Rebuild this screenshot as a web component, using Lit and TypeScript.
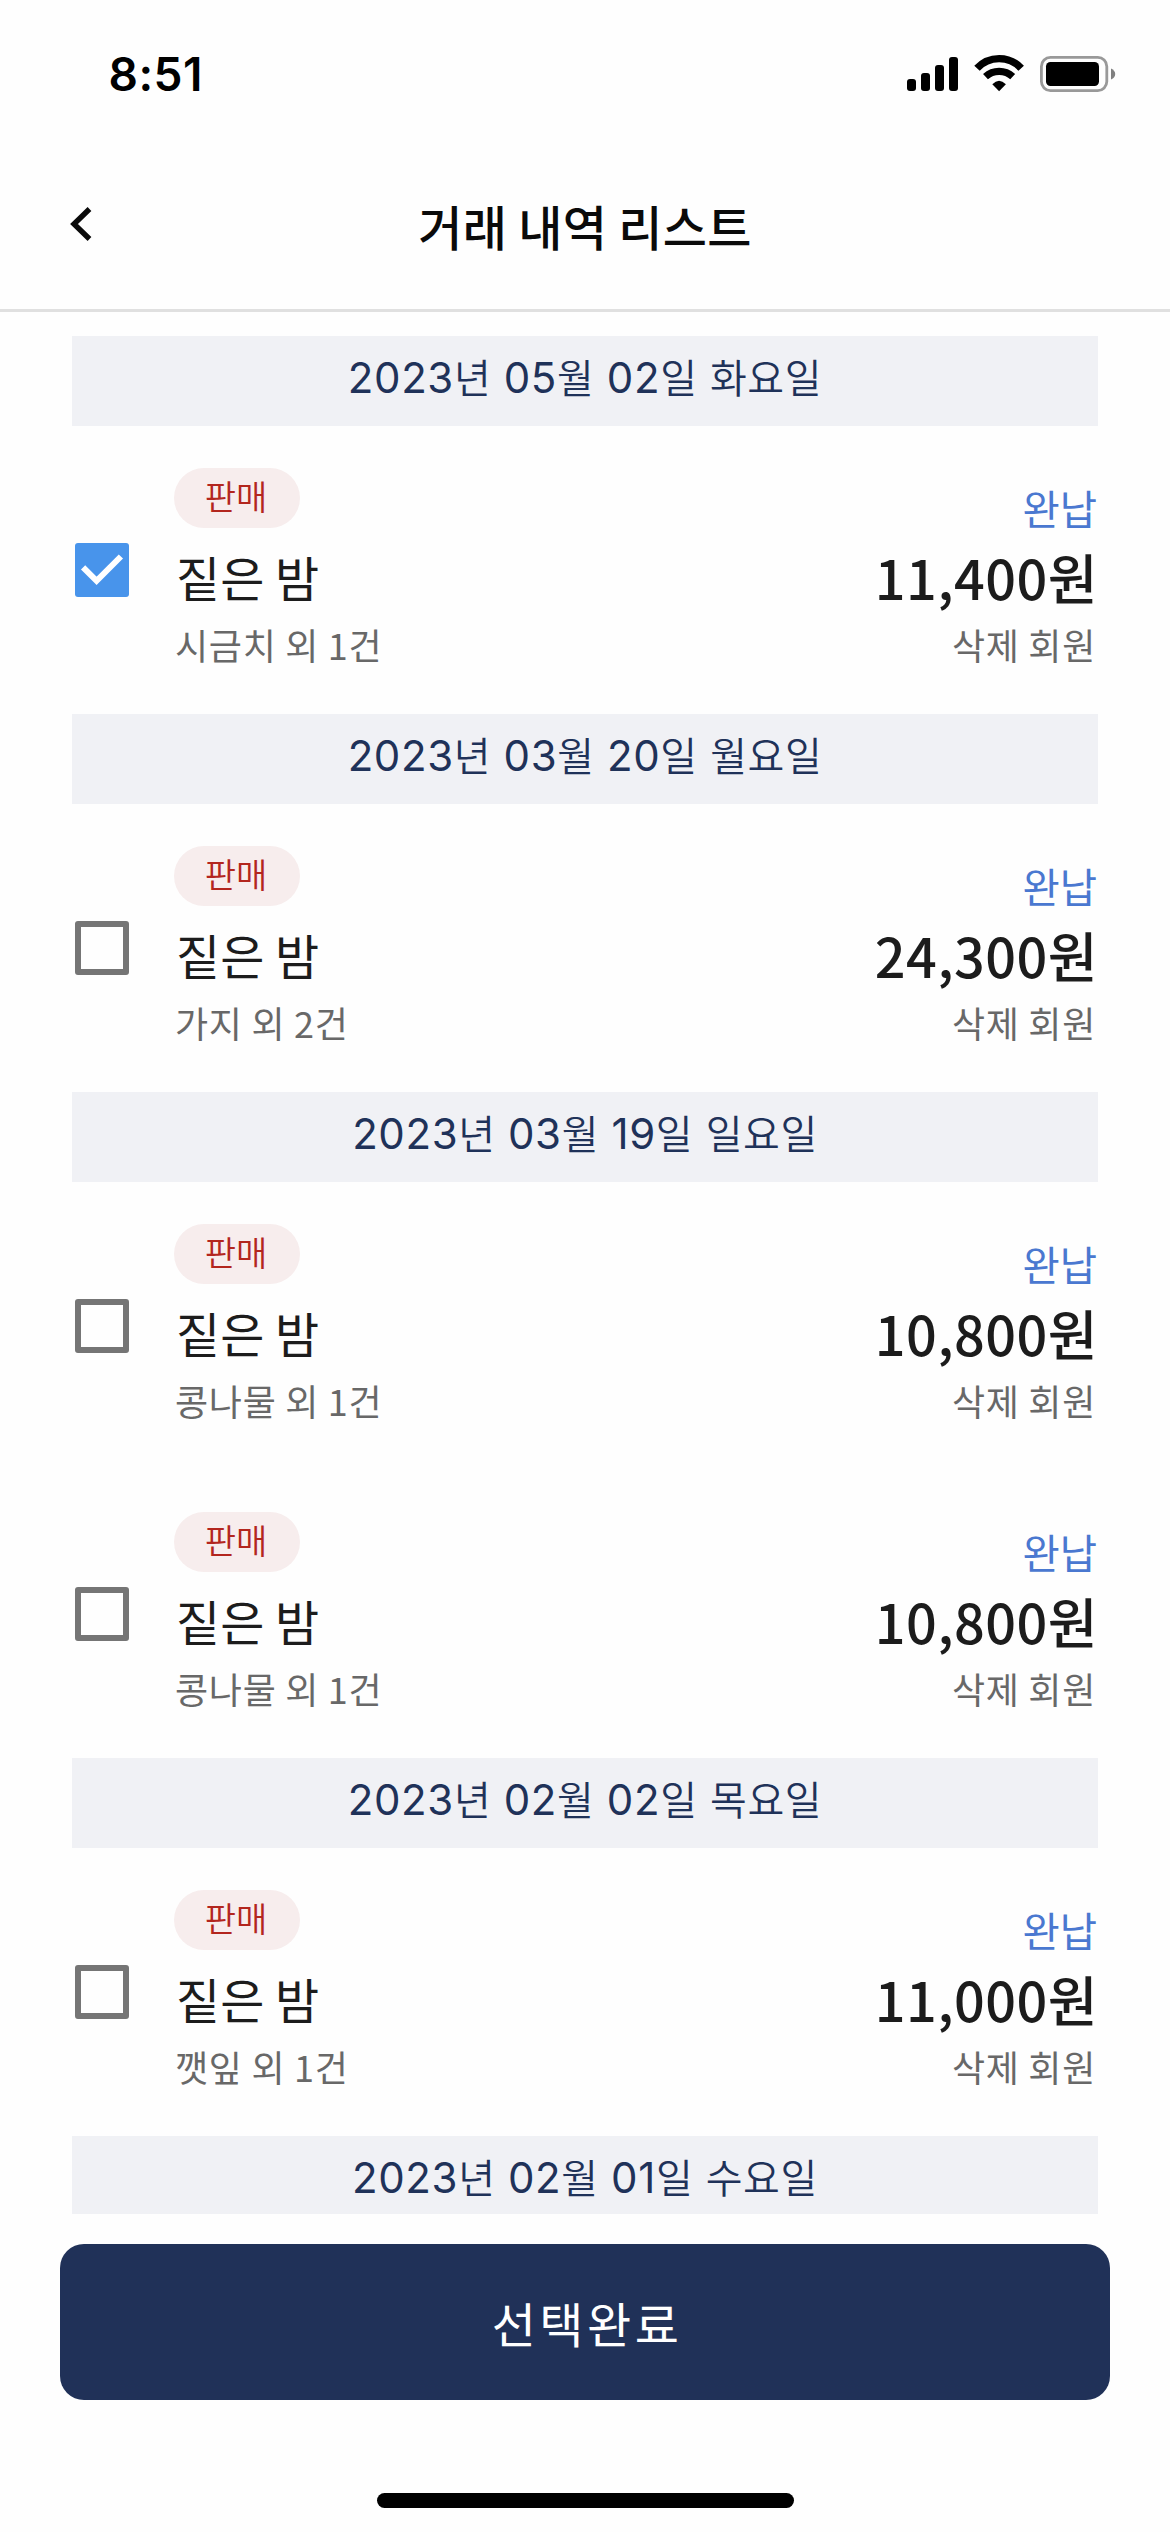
import { LitElement, html, css, svg } from "lit";
import { customElement, property } from "lit/decorators.js";
import { classMap } from "lit/directives/class-map.js";

interface Trade {
  kind: string;
  name: string;
  detail: string;
  status: string;
  amount: string;
  member: string;
  checked: boolean;
}

interface TradeGroup {
  date: string;
  trades: Trade[];
}

const trade = (detail: string, amount: string, checked = false): Trade => ({
  kind: "판매",
  name: "짙은 밤",
  detail,
  status: "완납",
  amount,
  member: "삭제 회원",
  checked,
});

const GROUPS: TradeGroup[] = [
  { date: "2023년 05월 02일 화요일", trades: [trade("시금치 외 1건", "11,400원", true)] },
  { date: "2023년 03월 20일 월요일", trades: [trade("가지 외 2건", "24,300원")] },
  {
    date: "2023년 03월 19일 일요일",
    trades: [trade("콩나물 외 1건", "10,800원"), trade("콩나물 외 1건", "10,800원")],
  },
  { date: "2023년 02월 02일 목요일", trades: [trade("깻잎 외 1건", "11,000원")] },
  { date: "2023년 02월 01일 수요일", trades: [] },
];

@customElement("status-bar")
export class StatusBar extends LitElement {
  static styles = css`
    :host {
      display: flex;
      justify-content: space-between;
      align-items: flex-start;
      height: 141px;
      padding: 46px 54px 0 108.5px;
      box-sizing: border-box;
    }
    .time {
      font: 600 46px/56px Inter, "Liberation Sans", sans-serif;
      letter-spacing: 0.5px;
      color: #000;
    }
    .icons {
      display: flex;
      padding-top: 8px;
    }
  `;

  render() {
    return html`
      <span class="time">8:51</span>
      <svg class="icons" width="210" height="40" viewBox="906 54 210 40">
        <rect x="907" y="79" width="9" height="12" rx="3" />
        <rect x="921" y="73" width="9" height="18" rx="3" />
        <rect x="935" y="65" width="9" height="26" rx="3" />
        <rect x="949" y="57" width="9" height="34" rx="3" />
        ${svg`
          <path d="M977 68.3A30 30 0 0 1 1021.2 68.3" fill="none" stroke="#000" stroke-width="7.4" />
          <path d="M985.5 76.7A20 20 0 0 1 1012.7 76.7" fill="none" stroke="#000" stroke-width="7.2" />
          <path d="M992.3 84.2Q999 77.2 1005.9 84.2L999.1 91.2Z" />
          <rect x="1041.4" y="57.4" width="65.4" height="33.2" rx="9" fill="none" stroke="#999" stroke-width="2.8" />
          <rect x="1046" y="62" width="53" height="24" rx="4.5" />
          <path d="M1111 68.5Q1115.2 70.5 1115.2 74T1111 79.5Z" fill="#808080" />
        `}
      </svg>
    `;
  }
}

@customElement("check-box")
export class CheckBox extends LitElement {
  @property({ type: Boolean }) checked = false;

  static styles = css`
    :host {
      display: block;
      width: 54px;
      height: 54px;
    }
    .box {
      box-sizing: border-box;
      width: 54px;
      height: 54px;
      border: 6px solid #757575;
      border-radius: 3px;
    }
    .box.on {
      border: 0;
      background: #4894eb;
    }
    .mark {
      display: block;
    }
  `;

  render() {
    return html`
      <div class=${classMap({ box: true, on: this.checked })}>
        ${this.checked
          ? html`<svg class="mark" width="54" height="54" viewBox="0 0 54 54">
              <path d="M8.1 24.3L21.6 37.8L45.9 13.5" fill="none" stroke="#fff" stroke-width="6" />
            </svg>`
          : null}
      </div>
    `;
  }
}

@customElement("trade-row")
export class TradeRow extends LitElement {
  @property({ attribute: false }) trade!: Trade;

  static styles = css`
    :host {
      display: flex;
      align-items: flex-start;
      height: 288px;
      box-sizing: border-box;
      padding-left: 3px;
    }
    .check {
      margin-top: 117px;
    }
    .info {
      display: flex;
      flex-direction: column;
      align-items: flex-start;
      margin-left: 45px;
      padding-top: 42px;
      flex: 1;
    }
    .badge {
      box-sizing: border-box;
      width: 126px;
      height: 60px;
      padding-right: 2px;
      border-radius: 30px;
      background: #f7eded;
      color: #b3261e;
      font-size: 34px;
      font-weight: 350;
      line-height: 55px;
      text-align: center;
    }
    .name {
      margin: 12px 0 0 2px;
      font-size: 48px;
      line-height: 72px;
      color: #1c1c1c;
    }
    .sub {
      font-size: 36px;
      line-height: 54px;
      letter-spacing: 0.7px;
      color: #686868;
    }
    .info .sub {
      margin: 5px 0 0 1px;
    }
    .side {
      display: flex;
      flex-direction: column;
      align-items: flex-end;
      padding-top: 52px;
    }
    .status {
      margin-right: 1px;
      font-size: 40.5px;
      line-height: 60px;
      color: #4a78d0;
    }
    .amount {
      font-size: 54px;
      font-weight: 500;
      line-height: 78px;
      letter-spacing: 0.5px;
      color: #1c1c1c;
    }
    .side .sub {
      margin: 1px 2px 0 0;
    }
  `;

  render() {
    const t = this.trade;
    return html`
      <check-box class="check" ?checked=${t.checked}></check-box>
      <div class="info">
        <span class="badge">${t.kind}</span>
        <span class="name">${t.name}</span>
        <span class="sub">${t.detail}</span>
      </div>
      <div class="side">
        <span class="status">${t.status}</span>
        <span class="amount">${t.amount}</span>
        <span class="sub">${t.member}</span>
      </div>
    `;
  }
}

@customElement("app-root")
export class AppRoot extends LitElement {
  static styles = css`
    :host {
      display: flex;
      flex-direction: column;
      width: 1170px;
      height: 2532px;
      overflow: hidden;
      background: #fefefe;
      font-family: "Noto Sans CJK KR", "Noto Sans", sans-serif;
    }
    .bar {
      display: grid;
      grid-template-columns: 92px 1fr 92px;
      align-items: center;
      height: 168px;
      border-bottom: 3px solid #e0e0e0;
    }
    .back {
      justify-self: end;
      margin-bottom: 2px;
    }
    .title {
      margin: 0;
      text-align: center;
      font-size: 48px;
      font-weight: 500;
      line-height: 72px;
      letter-spacing: 0.3px;
      color: #0a0a0a;
    }
    .list {
      height: 1878px;
      margin: 24px 72px 0;
      overflow: hidden;
    }
    .date {
      height: 90px;
      background: #f0f1f5;
      color: #1f3259;
      text-align: center;
      font-family: Inter, "Noto Sans CJK KR", sans-serif;
      font-size: 42px;
      font-weight: 400;
      line-height: 83px;
      letter-spacing: 0.6px;
    }
    .hangul {
      font-size: 40px;
      font-weight: 350;
      line-height: 1;
    }
    .done {
      display: block;
      flex: none;
      height: 156px;
      margin: 30px 60px 0;
      padding: 0 0 0 4px;
      border: 0;
      border-radius: 24px;
      background: #203158;
      color: #fff;
      font: 400 48px/156px "Noto Sans CJK KR", sans-serif;
      letter-spacing: 3.5px;
    }
    .home {
      flex: none;
      align-self: center;
      width: 417px;
      height: 15px;
      margin-top: 93px;
      border-radius: 8px;
      background: #000;
    }
  `;

  /** Sets the Hangul runs of a date slightly smaller than its digits. */
  private dateText(date: string) {
    const runs = date.match(/[가-힣]+|[^가-힣]+/g) ?? [];
    return runs.map((run) => (/[가-힣]/.test(run) ? html`<span class="hangul">${run}</span>` : run));
  }

  render() {
    return html`
      <status-bar></status-bar>
      <header class="bar">
        <svg class="back" width="22" height="36" viewBox="0 0 22 36">
          <path d="M19.5 3L4 18L19.5 33" fill="none" stroke="#0a0a0a" stroke-width="5.4" />
        </svg>
        <h1 class="title">거래 내역 리스트</h1>
      </header>
      <main class="list">
        ${GROUPS.map(
          (g) => html`
            <div class="date">${this.dateText(g.date)}</div>
            ${g.trades.map((t) => html`<trade-row .trade=${t}></trade-row>`)}
          `
        )}
      </main>
      <button class="done">선택완료</button>
      <div class="home"></div>
    `;
  }
}
